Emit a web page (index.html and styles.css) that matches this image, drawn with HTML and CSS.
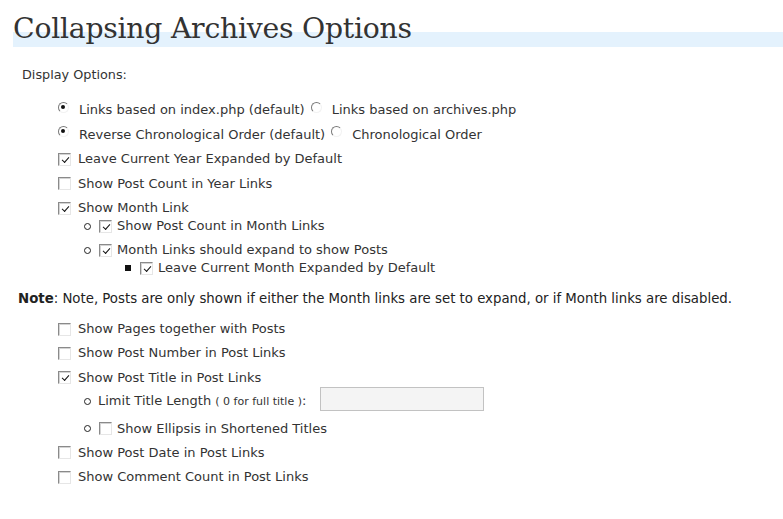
FILE: index.html
```html
<!DOCTYPE html>
<html>
<head>
<meta charset="utf-8">
<link rel="stylesheet" href="styles.css">
</head>
<body>
<div class="wrap">
  <h2 class="title">Collapsing Archives Options</h2>
  <div class="form">
    <p class="section">Display Options:</p>
    <div class="opts">
      <div class="row"><span class="radio on"></span><span class="lbl">Links based on index.php (default)</span><span class="radio"></span><span class="lbl">Links based on archives.php</span></div>
      <div class="row"><span class="radio on"></span><span class="lbl">Reverse Chronological Order (default)</span><span class="radio"></span><span class="lbl">Chronological Order</span></div>
      <div class="row"><span class="cb on"></span><span class="lbl">Leave Current Year Expanded by Default</span></div>
      <div class="row"><span class="cb"></span><span class="lbl">Show Post Count in Year Links</span></div>
      <div class="group">
        <div class="row"><span class="cb on"></span><span class="lbl">Show Month Link</span></div>
        <ul class="sub">
          <li class="item"><span class="circ"></span><span class="cb on"></span><span class="lbl">Show Post Count in Month Links</span></li>
          <li class="item gapped"><span class="circ"></span><span class="cb on"></span><span class="lbl">Month Links should expand to show Posts</span></li>
          <li class="item deep"><span class="sq"></span><span class="cb on"></span><span class="lbl">Leave Current Month Expanded by Default</span></li>
        </ul>
      </div>
    </div>
  </div>
  <p class="note"><strong>Note</strong>: Note, Posts are only shown if either the Month links are set to expand, or if Month links are disabled.</p>
  <div class="form">
    <div class="opts opts2">
      <div class="row"><span class="cb"></span><span class="lbl">Show Pages together with Posts</span></div>
      <div class="row"><span class="cb"></span><span class="lbl">Show Post Number in Post Links</span></div>
      <div class="row"><span class="cb on"></span><span class="lbl">Show Post Title in Post Links</span></div>
      <div class="item textrow"><span class="circ"></span><span class="lbl plain">Limit Title Length <small class="hint">( 0 for full title )</small>:</span><span class="field"></span></div>
      <div class="item ellrow"><span class="circ"></span><span class="cb"></span><span class="lbl">Show Ellipsis in Shortened Titles</span></div>
      <div class="row"><span class="cb"></span><span class="lbl">Show Post Date in Post Links</span></div>
      <div class="row"><span class="cb"></span><span class="lbl">Show Comment Count in Post Links</span></div>
    </div>
  </div>
</div>
</body>
</html>
```
FILE: styles.css
```css
html, body {
  margin: 0;
  padding: 0;
  background: #fff;
}
body {
  font-family: "DejaVu Sans", Verdana, sans-serif;
  font-size: 13px;
  color: #333;
}
.title {
  margin: 10px 0 0 13px;
  padding: 0;
  font-family: "DejaVu Serif", Georgia, serif;
  font-weight: normal;
  font-size: 28.3px;
  line-height: 38px;
  height: 38px;
  color: #333;
  background: linear-gradient(to bottom, transparent 22px, #e4f2fd 22px, #e4f2fd 37px, transparent 37px);
  letter-spacing: -0.25px;
}
.form {
  padding-left: 22px;
}
.section {
  margin: 19px 0 0 0;
  line-height: 16px;
  font-size: 12.8px;
}
.opts {
  margin: 18px 0 0 36px;
}
.row, .item {
  display: flex;
  align-items: center;
  height: 18px;
  line-height: 18px;
  margin-bottom: 6.5px;
  white-space: nowrap;
}
.lbl {
  margin-left: 7px;
}
.radio + .lbl {
  margin-left: 10px;
}
.lbl + .radio {
  margin-left: 6px;
}
.cb {
  flex: none;
  width: 13px;
  height: 13px;
  box-sizing: border-box;
  border: 1px solid;
  border-color: #8a8a8a #e6e6e6 #e6e6e6 #8a8a8a;
  box-shadow: inset 1px 1px 0 #d4d4d4;
  background: #fff;
  position: relative;
}
.cb.on::after {
  content: "";
  position: absolute;
  left: 3px;
  top: 3px;
  width: 6px;
  height: 3px;
  border-left: 1.6px solid #111;
  border-bottom: 1.6px solid #111;
  transform: rotate(-48deg);
  box-sizing: content-box;
}
.radio {
  flex: none;
  width: 11px;
  height: 11px;
  box-sizing: border-box;
  border-radius: 50%;
  border: 1.5px solid;
  border-color: #7a7a7a #f2f2f2 #f2f2f2 #7a7a7a;
  background: #fff;
  position: relative;
  top: -3px;
}
.radio.on::after {
  content: "";
  position: absolute;
  left: 2px;
  top: 2px;
  width: 4px;
  height: 4px;
  border-radius: 50%;
  background: #111;
}
.group .row {
  margin-bottom: 0;
}
.sub {
  list-style: none;
  margin: 0;
  padding: 0 0 0 26px;
}
.sub .item {
  margin-bottom: 0;
}
.sub .gapped {
  margin-top: 6px;
}
.sub .deep {
  padding-left: 41px;
}
.circ {
  flex: none;
  width: 7px;
  height: 7px;
  box-sizing: border-box;
  border: 1px solid #222;
  border-radius: 50%;
  margin-right: 8px;
}
.circ ~ .lbl {
  margin-left: 5px;
}
.sq {
  flex: none;
  width: 6px;
  height: 6px;
  background: #111;
  margin-right: 9px;
}
.sq ~ .lbl {
  margin-left: 5px;
}
.circ + .lbl.plain {
  margin-left: -1px;
}
.note {
  margin: 12px 0 0 18px;
  font-family: "DejaVu Sans Condensed", "DejaVu Sans", sans-serif;
  font-size: 14.8px;
  line-height: 18px;
  white-space: nowrap;
  color: #222;
}
.note strong {
  font-weight: bold;
}
.opts2 {
  margin-top: 13px;
}
.opts2 .row {
  margin-bottom: 6.4px;
}
.opts2 .item {
  padding-left: 26px;
}
.textrow {
  height: 24px !important;
  align-items: flex-end !important;
  margin-top: -6.4px;
  margin-bottom: 9px !important;
}
.textrow .circ {
  margin-bottom: 5.5px;
}
.ellrow {
  margin-bottom: 6px !important;
}
.hint {
  font-size: 11px;
}
.field {
  flex: none;
  align-self: stretch;
  width: 164px;
  box-sizing: border-box;
  border: 1px solid #c2c2c2;
  background: #f4f4f4;
  margin-left: 14px;
}
```
